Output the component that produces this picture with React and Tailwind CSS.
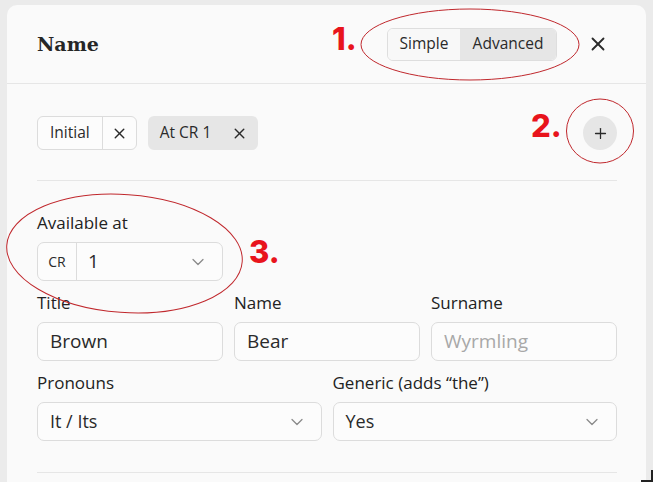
import { X, Plus, ChevronDown } from 'lucide-react'

const sans = { fontFamily: '"Open Sans", "Noto Sans", sans-serif' }

function Field({ label, children, className = '' }) {
  return (
    <div className={`flex flex-col ${className}`}>
      <label className="text-[17px] leading-[24px] font-medium text-[#222] mb-[7px]">{label}</label>
      {children}
    </div>
  )
}

function TextInput({ value, placeholder }) {
  return (
    <div className="h-[39px] rounded-[7px] border border-[#dcdcdc] bg-[#fcfcfc] px-[12px] flex items-center text-[19px]">
      {value ? <span className="text-[#2a2a2a]">{value}</span> : <span className="text-[#a8a8a8]">{placeholder}</span>}
    </div>
  )
}

function Select({ value }) {
  return (
    <div className="h-[39px] rounded-[7px] border border-[#dcdcdc] bg-[#fcfcfc] pl-[12px] pr-[14px] flex items-center justify-between text-[18px] text-[#2a2a2a]">
      <span>{value}</span>
      <ChevronDown size={20} strokeWidth={1.5} className="text-[#8a8a8a]" />
    </div>
  )
}

export default function App() {
  return (
    <div className="relative w-[653px] h-[482px] overflow-hidden bg-[#ebebeb] pl-[7px] pt-[5px] pr-[7px]" style={sans}>
      <div className="h-full rounded-t-[10px] bg-[#fafafa] flex flex-col">
        {/* header */}
        <div className="h-[79px] shrink-0 border-b border-[#e6e6e6] pl-[30px] pr-[37px] flex items-center justify-between">
          <h2 className="text-[19px] font-bold text-[#262626]" style={{ fontFamily: '"DejaVu Serif", serif' }}>Name</h2>
          <div className="flex items-center gap-[30px]">
            <div className="flex h-[33px] rounded-[6px] border border-[#dedede] overflow-hidden text-[15.5px] text-[#2a2a2a]">
              <div className="w-[72px] flex items-center justify-center bg-[#f8f8f8]">Simple</div>
              <div className="w-[96px] flex items-center justify-center bg-[#e6e6e6]">Advanced</div>
            </div>
            <X size={22} strokeWidth={2} className="text-[#2a2a2a]" />
          </div>
        </div>

        {/* body */}
        <div className="pl-[30px] pr-[29px] pt-[32px]">
          <div className="flex items-center justify-between">
            <div className="flex items-center gap-[11px] text-[15.5px] text-[#2a2a2a]">
              <div className="flex h-[34px] rounded-[6px] border border-[#dcdcdc] bg-[#fcfcfc]">
                <span className="px-[12px] flex items-center border-r border-[#dcdcdc]">Initial</span>
                <span className="w-[33px] flex items-center justify-center"><X size={17} strokeWidth={2} /></span>
              </div>
              <div className="flex h-[34px] items-center rounded-[6px] bg-[#e6e6e6] pl-[12px] pr-[10px] gap-[20px]">
                <span>At CR 1</span>
                <X size={17} strokeWidth={2} />
              </div>
            </div>
            <div className="w-[34px] h-[34px] rounded-full bg-[#e6e6e6] flex items-center justify-center text-[#2a2a2a]">
              <Plus size={17} strokeWidth={1.8} />
            </div>
          </div>

          <div className="mt-[30px] border-t border-[#e6e6e6]" />

          <Field label="Available at" className="mt-[30px] w-[186px]">
            <div className="h-[39px] rounded-[7px] border border-[#dcdcdc] bg-[#fcfcfc] flex items-center text-[#2a2a2a]">
              <span className="w-[39px] h-full flex items-center justify-center border-r border-[#dcdcdc] text-[14px]">CR</span>
              <span className="flex-1 pl-[11px] text-[19px]">1</span>
              <ChevronDown size={20} strokeWidth={1.5} className="text-[#8a8a8a] mr-[14px]" />
            </div>
          </Field>

          <div className="mt-[10px] grid grid-cols-3 gap-[11px]">
            <Field label="Title"><TextInput value="Brown" /></Field>
            <Field label="Name"><TextInput value="Bear" /></Field>
            <Field label="Surname"><TextInput placeholder="Wyrmling" /></Field>
          </div>

          <div className="mt-[10px] grid grid-cols-2 gap-[11px]">
            <Field label="Pronouns"><Select value="It / Its" /></Field>
            <Field label={'Generic (adds \u201cthe\u201d)'}><Select value="Yes" /></Field>
          </div>

          <div className="mt-[31px] border-t border-[#e6e6e6]" />
        </div>
      </div>

      {/* resize corner */}
      <div className="absolute right-[0px] bottom-[0px] w-[12px] h-[12px] border-r-2 border-b-2 border-[#222]" />

      {/* annotations */}
      <svg className="absolute inset-0 pointer-events-none" width="653" height="482">
        <ellipse cx="470" cy="44.5" rx="109" ry="35.5" fill="none" stroke="#c0282d" strokeWidth="1" />
        <ellipse cx="600" cy="131" rx="33.5" ry="32" fill="none" stroke="#c0282d" strokeWidth="1" />
        <ellipse cx="124.5" cy="253.5" rx="118" ry="59" fill="none" stroke="#c0282d" strokeWidth="1" transform="rotate(4 124.5 253.5)" />
      </svg>
      <span className="absolute left-[332px] top-[21px] text-[31px] leading-[36px] font-extrabold text-[#e8141c]" style={{ fontFamily: 'Inter, sans-serif' }}>1.</span>
      <span className="absolute left-[531px] top-[108px] text-[31px] leading-[36px] font-extrabold text-[#e8141c]" style={{ fontFamily: 'Inter, sans-serif' }}>2.</span>
      <span className="absolute left-[249px] top-[234px] text-[31px] leading-[36px] font-extrabold text-[#e8141c]" style={{ fontFamily: 'Inter, sans-serif' }}>3.</span>
    </div>
  )
}
